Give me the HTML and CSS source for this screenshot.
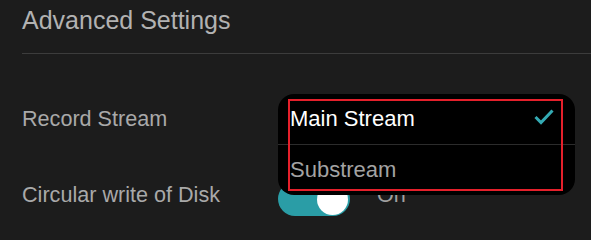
FILE: index.html
```html
<!DOCTYPE html>
<html>
<head>
<meta charset="utf-8">
<link rel="stylesheet" href="styles.css">
</head>
<body>
<div class="page">
  <div class="header"><h1 class="title">Advanced Settings</h1></div>
  <div class="row row-stream">
    <div class="label">Record Stream</div>
  </div>
  <div class="row row-disk">
    <div class="label">Circular write of Disk</div>
    <div class="toggle"><span class="knob"></span></div>
    <span class="state">On</span>
  </div>
</div>
<div class="menu">
  <div class="item item-selected">
    <span>Main Stream</span>
    <svg class="check" width="20" height="16" viewBox="0 0 20 16"><polyline points="1.5,8 7,13.5 18.5,1.5" fill="none" stroke="#34aab3" stroke-width="3"/></svg>
  </div>
  <div class="item">
    <span>Substream</span>
  </div>
  <div class="highlight"></div>
</div>
</body>
</html>
```
FILE: styles.css
```css
html, body {
  margin: 0;
  padding: 0;
  background: #1c1c1c;
  width: 591px;
  height: 219px;
  overflow: hidden;
  font-family: "Liberation Sans", Arial, sans-serif;
}
.page {
  padding-left: 22px;
}
.header {
  height: 53px;
  border-bottom: 1px solid #3c3c3c;
}
.title {
  margin: 0;
  padding-top: 6px;
  font-size: 25px;
  line-height: 29px;
  font-weight: normal;
  color: #b2b2b2;
}
.row {
  display: flex;
  align-items: flex-start;
}
.label {
  width: 256px;
  flex: none;
  font-size: 21.6px;
  line-height: 24px;
  color: #a9a9a9;
  white-space: nowrap;
}
.row-stream {
  margin-top: 53px;
  height: 24px;
}
.row-disk {
  margin-top: 52px;
}
.toggle {
  width: 72px;
  height: 34px;
  margin-top: -1px;
  border-radius: 17px;
  background: #2a9da6;
  display: flex;
  justify-content: flex-end;
  align-items: center;
  padding-right: 2px;
  box-sizing: border-box;
  flex: none;
}
.knob {
  width: 31px;
  height: 31px;
  border-radius: 50%;
  background: #ffffff;
}
.state {
  margin-left: 27px;
  font-size: 21.6px;
  line-height: 24px;
  color: #a0a0a0;
}
.menu {
  position: absolute;
  left: 278px;
  top: 94px;
  width: 297px;
  height: 101px;
  background: #000;
  border-radius: 16px;
  display: flex;
  flex-direction: column;
}
.item {
  height: 50px;
  flex: none;
  display: flex;
  align-items: center;
  justify-content: space-between;
  padding: 0 21px 0 12px;
  font-size: 22px;
  line-height: 50px;
  color: #a3a3a3;
}
.item-selected {
  color: #ffffff;
  border-bottom: 1px solid #2c2c2c;
}
.check {
  margin-top: -4px;
}
.highlight {
  position: absolute;
  left: 10px;
  top: 5px;
  width: 271px;
  height: 88px;
  border: 2px solid #e5202b;
}
```
